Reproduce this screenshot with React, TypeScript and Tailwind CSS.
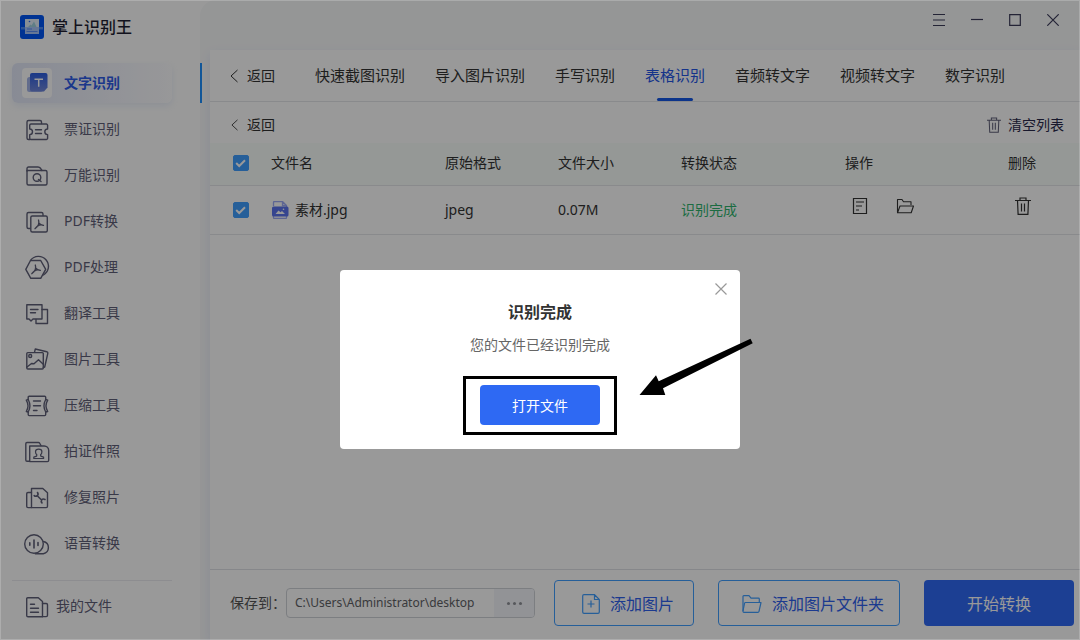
import { useState, type ReactNode } from 'react';

function LineIcon({ children }: { children: ReactNode }) {
    return (
        <svg
            viewBox="0 0 26 26"
            className="h-[26px] w-[26px] shrink-0"
            fill="none"
            stroke="currentColor"
            strokeWidth="1.4"
            strokeLinecap="round"
            strokeLinejoin="round"
            aria-hidden="true"
        >
            {children}
        </svg>
    );
}

const menuItems: { label: string; icon: ReactNode }[] = [
    {
        label: '票证识别',
        icon: (
            <>
                <path d="M17.5 7.5V6a1.5 1.5 0 0 0-1.5-1.5H4.5A1.5 1.5 0 0 0 3 6v16a1.5 1.5 0 0 0 1.5 1.5H6" />
                <path d="M7 8h15.3a1.3 1.3 0 0 1 1.3 1.3V13a2.8 2.8 0 0 0 0 5.6v3.6a1.3 1.3 0 0 1-1.3 1.3H7a1.3 1.3 0 0 1-1.3-1.3v-3.6a2.8 2.8 0 0 0 0-5.6V9.3A1.3 1.3 0 0 1 7 8Z" />
                <path d="M11.5 13.7h6M11.5 17.5h6" />
            </>
        ),
    },
    {
        label: '万能识别',
        icon: (
            <>
                <path d="M3 9V6.5A1.5 1.5 0 0 1 4.5 5H14q1.5 0 2.5 1.3L18 8.5" />
                <path d="M3 8.5h18.5A1.5 1.5 0 0 1 23 10v11.5a1.5 1.5 0 0 1-1.5 1.5h-17A1.5 1.5 0 0 1 3 21.5Z" />
                <circle cx="13" cy="15.5" r="3.8" />
                <path d="m14.5 17.5 2.5 2" />
            </>
        ),
    },
    {
        label: 'PDF转换',
        icon: (
            <>
                <path d="M19 7.5V6a1.5 1.5 0 0 0-1.5-1.5h-13A1.5 1.5 0 0 0 3 6v13a1.5 1.5 0 0 0 1.5 1.5H6" />
                <rect x="6.8" y="8" width="16.5" height="16" rx="1.5" />
                <path strokeWidth="1.3" d="M14.5 12q.8 2.5 0 4.5-1 2.6-3.5 4.2 1.8-2.6 4.3-3.5 2.2-.7 4.2.2-3-.3-4.7-2.4" />
            </>
        ),
    },
    {
        label: 'PDF处理',
        icon: (
            <>
                <path d="M6.5 6.5h10.2l5 8.9-5 8.9H6.8l-5-8.9Z" />
                <path d="M6.5 6.3A10 10 0 1 1 19.5 21" />
                <path strokeWidth="1.3" d="M11.3 11q.8 2.5 0 4.5-1 2.6-3.5 4.2 1.8-2.6 4.3-3.5 2.2-.7 4.2.2-3-.3-4.7-2.4" />
            </>
        ),
    },
    {
        label: '翻译工具',
        icon: (
            <>
                <path d="M2.8 4.8H18V19H9l-2 2-2-2H2.8Z" />
                <path d="M18 9.5h5.5v14H12V19.5" />
                <path d="M6.5 9.5h7.5M6.5 12.8h5" />
            </>
        ),
    },
    {
        label: '图片工具',
        icon: (
            <>
                <rect x="2.8" y="6.6" width="16.5" height="16.4" rx="1" />
                <path d="M10.5 6.3 11.3 3l11.5 2.7q1.3.4 1 1.6L20.7 21l-1.4.5" />
                <circle cx="6.2" cy="10" r="1.5" />
                <path d="m3 21 4.5-3.5 2.5.3 4.5-4 4.5 4.2" />
            </>
        ),
    },
    {
        label: '压缩工具',
        icon: (
            <>
                <path d="M4.2 7.5V5.2q0-1 1-1h15.5q1 0 1 1v2.3M4.2 20v2.6q0 1 1 1h15.5q1 0 1-1V20" />
                <path d="M2.3 8.2q3.4 5.7 0 11.3M23.7 8.2q-3.4 5.7 0 11.3M4.2 7.5q3.4 6.3 0 12.5M21.7 7.5q-3.4 6.3 0 12.5M2.3 8.2l1.9-.7M23.7 8.2l-2-.7M2.3 19.5l1.9.5M23.7 19.5l-2 .5" />
                <path d="M9.5 9h7M9.5 13.7h7M9.5 18.5h3.5" />
            </>
        ),
    },
    {
        label: '拍证件照',
        icon: (
            <>
                <path d="M17 7.5 15.5 5q-.4-.5-1-.5H3Q1.8 4.5 1.8 5.7V22q0 1.3 1.2 1.3h2.5" />
                <path d="M5.7 8h14.5a4.5 4.5 0 0 1 4.5 4.5v9.8q0 1.3-1.3 1.3H5.7Z" />
                <path strokeWidth="1.2" d="M12.8 16.8q-1.3-1.2-1.3-3 0-2.6 3.2-2.6t3.2 2.6q0 1.8-1.3 3l.2 1.3 2.8 1v1.4h-9.8v-1.4l2.8-1Z" />
            </>
        ),
    },
    {
        label: '修复照片',
        icon: (
            <>
                <path d="M7.5 8.5H4q-1.3 0-1.3 1.3v12.5q0 1.3 1.3 1.3h3.5" />
                <path d="M7.5 4.5h11.3l4.7 4.3v13.5q0 1.3-1.3 1.3H7.5Z" />
                <path strokeWidth="1.6" d="M13.5 8.5q1.3 2-.3 3.3-1.7 1-3-.2M13.5 12l3.8 3.7M21 15.5q-2-1.2-3.3.3-1 1.6.3 3.2" />
            </>
        ),
    },
    {
        label: '语音转换',
        icon: (
            <>
                <circle cx="10" cy="14" r="9.3" />
                <path d="M19.3 11.5a6.2 6.2 0 0 1 0 12.2h-8" />
                <path strokeWidth="1.6" d="M5.8 12.8v2.4M10 10v8M14 12.5v3" />
            </>
        ),
    },
];

const tabs = ['快速截图识别', '导入图片识别', '手写识别', '表格识别', '音频转文字', '视频转文字', '数字识别'];

function ChevronLeft({ className }: { className: string }) {
    return (
        <svg viewBox="0 0 8 14" className={className} fill="none" stroke="currentColor" aria-hidden="true">
            <path d="M7.5 1 1 7l6.5 6" />
        </svg>
    );
}

function Trash({ className }: { className: string }) {
    return (
        <svg viewBox="0 0 16 18" className={className} fill="none" stroke="currentColor" strokeWidth="1.2" aria-hidden="true">
            <path d="M0 3.5h16M5 3.5V1h6v2.5M2.5 3.5l.6 13.8h9.8l.6-13.8M6.5 6.5v8M9.5 6.5v8" />
        </svg>
    );
}

function FolderOpen({ className }: { className: string }) {
    return (
        <svg viewBox="0 0 18 16" className={className} fill="none" stroke="currentColor" strokeWidth="1.1" strokeLinejoin="round" aria-hidden="true">
            <path d="M1.5 14.5v-13H6l1.5 2.3h7.500V7" />
            <path d="M1.5 14.8 4 8h13.500l-2.300 6.800Z" />
        </svg>
    );
}

function Checkbox({ label }: { label: string }) {
    const [checked, setChecked] = useState(true);

    return (
        <label className="grid h-4 w-4 place-items-center">
            <input
                type="checkbox"
                aria-label={label}
                checked={checked}
                onChange={event => setChecked(event.target.checked)}
                className="col-start-1 row-start-1 h-4 w-4 appearance-none rounded-xs border border-[#409eff] checked:bg-[#409eff]"
            />
            <svg viewBox="0 0 16 16" className="pointer-events-none col-start-1 row-start-1 h-4 w-4" fill="none" stroke="#fff" strokeWidth="2" aria-hidden="true">
                {checked && <path d="m3.2 8 3 3L12 5.2" />}
            </svg>
        </label>
    );
}

function Sidebar() {
    return (
        <aside className="flex w-[200px] shrink-0 flex-col bg-white">
            <div className="flex h-[63px] items-start gap-2 pt-[15px] pl-5">
                <svg viewBox="0 0 24 24" className="h-6 w-6" aria-hidden="true">
                    <rect width="24" height="24" rx="3" fill="#0055f5" />
                    <path d="M5 4h14v8H5Z" fill="#e3eef9" />
                    <path d="m8 12 2.5-2.500 1 1L14 6.500l2.500 5.500H8Z" fill="#9fd2e0" />
                    <circle cx="9.500" cy="6.500" r=".8" fill="#2f69f5" />
                    <path d="M1 12h22v2.500H1Z" fill="#4d8df7" />
                    <path d="M5 12h14v7H5Z" fill="#a9c6fa" />
                    <path d="M7 14h5M6.500 16.500h11" stroke="#5d8ff7" />
                </svg>
                <h1 className="text-base leading-6 font-medium text-[#1f1f33]">掌上识别王</h1>
            </div>
            <nav className="flex flex-col gap-1.5 pr-7 pl-3">
                <a
                    href="#text"
                    aria-current="page"
                    className="flex h-10 items-center gap-3 rounded-md bg-linear-to-r from-[#e3e8f8] to-[#fdfdff] pl-2.5 text-sm font-bold text-[#2f5de8] shadow-[0_3px_6px_rgba(150,180,230,0.18)]"
                >
                    <span className="flex h-[30px] w-[30px] items-center justify-center rounded bg-white">
                        <svg viewBox="0 0 22 20" className="h-5 w-[22px]" aria-hidden="true">
                            <defs>
                                <linearGradient id="tile" x1="0" y1="0" x2="0" y2="1">
                                    <stop offset="0" stopColor="#2d5fe2" />
                                    <stop offset="1" stopColor="#7087dc" />
                                </linearGradient>
                            </defs>
                            <rect x="1" y="4" width="16" height="15" rx="2.5" fill="#a4b5ea" />
                            <path d="M6 0H19.5a2 2 0 0 1 2 2V14.5L18 18.5H6a2 2 0 0 1-2-2V2a2 2 0 0 1 2-2Z" fill="url(#tile)" />
                            <path d="M8.5 6.2h8.5M12.7 6.2v7.6" stroke="#fff" strokeWidth="1.5" />
                        </svg>
                    </span>
                    文字识别
                </a>
                {menuItems.map(item => (
                    <a key={item.label} href="#" className="flex h-10 items-center gap-3.5 pl-3 text-sm text-[#5f6078]">
                        <LineIcon>{item.icon}</LineIcon>
                        {item.label}
                    </a>
                ))}
            </nav>
            <div className="mt-auto mr-7 ml-3 border-t border-[#ebebf0] pt-[5px] pb-[14px]">
                <a href="#files" className="flex h-10 items-center gap-1.5 pl-3 text-sm text-[#5f6078]">
                    <LineIcon>
                        <path d="M3.7 4.7h10.6l4.2 3.8v15.2H4q-1.3 0-1.3-1.3V5.7q0-1 1-1Z" />
                        <path d="M18.5 10.5h3.7q1.3 0 1.3 1.3v10.5q0 1.3-1.3 1.3h-3.7" />
                        <path d="M6.5 11.3h4M6.5 15.3h8M6.5 19.3h8" />
                    </LineIcon>
                    我的文件
                </a>
            </div>
        </aside>
    );
}

function WindowControls() {
    const controls = [
        { label: '菜单', path: 'M0 .5h12M0 6h12M0 11.5h12' },
        { label: '最小化', path: 'M0 5.5h12' },
        { label: '最大化', path: 'M.7.7h10.6v10.6H.7Z' },
        { label: '关闭窗口', path: 'm.3.3 11.4 11.4M11.7.3.3 11.7' },
    ];

    return (
        <header className="flex h-[50px] justify-end pr-2">
            {controls.map(control => (
                <button key={control.label} type="button" aria-label={control.label} className="flex h-10 w-[38px] items-center justify-center">
                    <svg viewBox="0 0 12 12" className="h-3 w-3" fill="none" stroke="#3c3c5a" strokeWidth="1.2" aria-hidden="true">
                        <path d={control.path} />
                    </svg>
                </button>
            ))}
        </header>
    );
}

function FileTable() {
    return (
        <table className="w-full table-fixed text-left text-sm text-[#333]">
            <colgroup>
                <col className="w-[61px]" />
                <col className="w-[174px]" />
                <col className="w-[113px]" />
                <col className="w-[123px]" />
                <col className="w-[164px]" />
                <col className="w-[163px]" />
                <col className="w-[72px]" />
            </colgroup>
            <thead>
                <tr className="h-[42px] border-b border-[#e4e6ea] bg-[#f8fdfb]">
                    <th className="pb-0.5 pl-[23px]">
                        <Checkbox label="全选" />
                    </th>
                    <th className="pb-0.5 font-normal">文件名</th>
                    <th className="pb-0.5 font-normal">原始格式</th>
                    <th className="pb-0.5 font-normal">文件大小</th>
                    <th className="pb-0.5 font-normal">转换状态</th>
                    <th className="pb-0.5 font-normal">操作</th>
                    <th className="pb-0.5 font-normal">删除</th>
                </tr>
            </thead>
            <tbody>
                <tr className="h-[49px] border-b border-[#e4e6ea]">
                    <td className="pl-[23px]">
                        <Checkbox label="素材.jpg" />
                    </td>
                    <td>
                        <span className="flex items-center gap-1.5">
                            <svg viewBox="0 0 18 18" className="h-[18px] w-[18px]" fill="none" aria-hidden="true">
                                <path d="M2.5 5V1.5q0-1 1-1h8l4 4V6M11.5.5v4h4M2.5 15v1.5q0 1 1 1h11q1 0 1-1V15" stroke="#9dabf6" strokeWidth="1.3" />
                                <rect x="1" y="5.5" width="16.5" height="10" rx="1.5" fill="#5b74ee" />
                                <path d="m4.5 13 3-3.5 2 1.7 1.5-1.2 3 3Z" fill="#fff" />
                                <circle cx="12.5" cy="8.3" r=".8" fill="#fff" />
                            </svg>
                            素材.jpg
                        </span>
                    </td>
                    <td>jpeg</td>
                    <td>0.07M</td>
                    <td className="text-[#2fb56e]">识别完成</td>
                    <td>
                        <span className="flex items-center gap-7 pb-2 pl-[7px]">
                            <button type="button" aria-label="查看文件">
                                <svg viewBox="0 0 16 16" className="h-4 w-4" fill="none" stroke="currentColor" strokeWidth="1.2" aria-hidden="true">
                                    <path d="M1.5.5h13v15h-13ZM4 4h8M4 8h6M4 12h3" />
                                </svg>
                            </button>
                            <button type="button" aria-label="打开文件夹">
                                <FolderOpen className="h-4 w-[18px]" />
                            </button>
                        </span>
                    </td>
                    <td>
                        <button type="button" aria-label="删除文件" className="block pb-2 pl-[7px]">
                            <Trash className="h-[18px] w-4" />
                        </button>
                    </td>
                </tr>
            </tbody>
        </table>
    );
}

function Footer() {
    return (
        <footer className="flex h-[71px] items-center border-t border-[#dfe1e6] pr-1.5 pb-1 pl-5">
            <label htmlFor="save-path" className="shrink-0 text-sm text-[#555]">
                保存到：
            </label>
            <div className="flex h-[30px] w-[249px] overflow-hidden rounded border border-[#cfd2d8]">
                <input
                    id="save-path"
                    readOnly
                    defaultValue="C:\Users\Administrator\desktop"
                    className="min-w-0 flex-1 pl-2 text-xs text-[#606266]"
                />
                <button type="button" aria-label="选择目录" className="flex w-10 items-center justify-center gap-[3px] bg-[#f4f6fa]">
                    <span className="h-[3px] w-[3px] rounded-full bg-[#909399]" />
                    <span className="h-[3px] w-[3px] rounded-full bg-[#909399]" />
                    <span className="h-[3px] w-[3px] rounded-full bg-[#909399]" />
                </button>
            </div>
            <div className="ml-auto flex gap-6 text-base">
                <button type="button" className="flex h-[46px] w-[140px] items-center justify-center gap-2.5 rounded border border-[#409eff] pt-0.5 pl-2 text-[#2f62ee]">
                    <svg viewBox="0 0 18 20" className="h-5 w-[18px]" fill="none" stroke="#409eff" strokeWidth="1.2" aria-hidden="true">
                        <path d="M12.5.7H2Q.7.7.7 2v16q0 1.3 1.3 1.3h14q1.3 0 1.3-1.3V5.500ZM12.500.7v4.800h4.800M9 6.500v7M5.500 10h7" />
                    </svg>
                    添加图片
                </button>
                <button type="button" className="flex h-[46px] w-[182px] items-center justify-center gap-2.5 rounded border border-[#409eff] pt-0.5 pl-2 text-[#2f62ee]">
                    <svg viewBox="0 0 20 18" className="h-[18px] w-5" fill="none" stroke="#409eff" strokeWidth="1.2" strokeLinejoin="round" aria-hidden="true">
                        <path d="M1 16V1.500q0-.8.800-.8H7l2 2.500h7.500q.8 0 .8.800v3" />
                        <path d="M3.500 7.500H19l-2 8.800q-.2 1-1.200 1H2Q.8 17.300 1 16l1.500-7.500q.2-1 1-1Z" />
                    </svg>
                    添加图片文件夹
                </button>
                <button type="button" className="h-[46px] w-[150px] rounded bg-[#2f69f6] pt-0.5 text-white">
                    开始转换
                </button>
            </div>
        </footer>
    );
}

function CompleteDialog() {
    return (
        <div className="absolute inset-0 flex items-start justify-center border border-white/20 bg-black/40 pt-[269px]">
            <section role="dialog" aria-labelledby="dialog-title" className="relative flex w-[400px] flex-col items-center rounded bg-white pt-[30px] pb-[14px]">
                <button type="button" aria-label="关闭" className="absolute top-[13px] right-[13px]">
                    <svg viewBox="0 0 12 12" className="h-3 w-3" fill="none" stroke="#999" strokeWidth="1.2" aria-hidden="true">
                        <path d="m.5.5 11 11M11.5.5.5 11.5" />
                    </svg>
                </button>
                <h2 id="dialog-title" className="text-base leading-6 font-bold text-[#333]">
                    识别完成
                </h2>
                <p className="mt-2.5 text-sm leading-[22px] text-[#666]">您的文件已经识别完成</p>
                <div className="mt-5 flex h-[59px] w-[154px] items-center justify-center border-3 border-black pb-px">
                    <button type="button" className="h-10 w-[120px] rounded bg-[#2e69f3] pt-0.5 text-sm text-white">
                        打开文件
                    </button>
                </div>
                <svg viewBox="0 0 116 60" className="pointer-events-none absolute top-[67px] left-[299px] h-[60px] w-[116px]" aria-hidden="true">
                    <path d="M.5 58 17 38.3l2.7 6L111.5 1.7l2.2 4.6L24 51.3l2.3 6.7Z" fill="#000" />
                </svg>
            </section>
        </div>
    );
}

export default function App() {
    const [activeTab, setActiveTab] = useState('表格识别');

    return (
        <div className="relative flex h-screen min-h-[640px] overflow-hidden bg-white font-['Noto_Sans','Noto_Sans_CJK_SC',sans-serif]">
            <Sidebar />
            <div className="flex min-w-0 flex-1 rounded-tl-2xl bg-[#f9fafb]">
                <div className="w-2.5 shrink-0 pt-[63px]">
                    <div className="h-10 w-0.5 bg-[#1e90ff]" />
                </div>
                <div className="flex min-w-0 flex-1 flex-col">
                    <WindowControls />
                    <main className="flex flex-1 flex-col bg-white shadow-[0_4px_10px_rgba(90,120,220,0.12)]">
                        <div className="flex h-[52px] items-stretch border-b border-[#e4e6ea] pl-5 text-[#333]">
                            <button type="button" className="mr-10 flex items-center gap-[9px] text-sm">
                                <ChevronLeft className="h-3.5 w-2" />
                                返回
                            </button>
                            <nav className="flex gap-[30px] text-[15px]">
                                {tabs.map(tab => (
                                    <button
                                        key={tab}
                                        type="button"
                                        onClick={() => setActiveTab(tab)}
                                        className={
                                            tab === activeTab
                                                ? 'flex flex-col items-center justify-between text-[#2455e6]'
                                                : 'flex flex-col items-center justify-between'
                                        }
                                    >
                                        <span className="flex flex-1 items-center pt-[3px]">{tab}</span>
                                        <span className={tab === activeTab ? 'h-[3px] w-9 rounded-xs bg-[#1557e6]' : 'h-[3px] w-9'} />
                                    </button>
                                ))}
                            </nav>
                        </div>
                        <div className="flex h-[41px] items-center justify-between pt-1 pr-4 pl-[21px] text-sm text-[#333]">
                            <button type="button" className="flex items-center gap-[9px]">
                                <ChevronLeft className="h-3 w-[7px]" />
                                返回
                            </button>
                            <button type="button" className="flex items-center gap-[7px] text-[#29294a]">
                                <Trash className="h-4 w-3.5 text-[#62627a]" />
                                清空列表
                            </button>
                        </div>
                        <FileTable />
                        <div className="flex-1" />
                        <Footer />
                    </main>
                </div>
            </div>
            <CompleteDialog />
        </div>
    );
}
